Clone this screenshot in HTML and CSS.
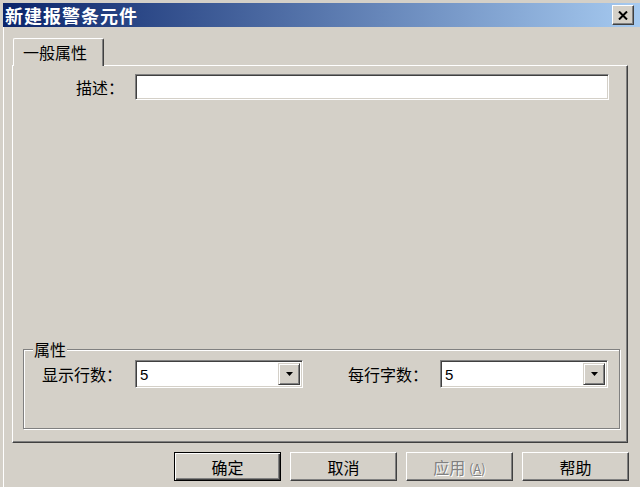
FILE: index.html
```html
<!DOCTYPE html>
<html lang="zh-CN">
<head>
    <meta charset="UTF-8">
    <meta name="viewport" content="width=device-width, initial-scale=1.0">
    <title>新建报警条元件</title>
    <link rel="stylesheet" href="styles.css">
</head>
<body>
    <div class="window">
        <div class="titlebar">
            <span class="title">新建报警条元件</span>
            <button class="close" type="button">
                <svg width="10" height="9" viewBox="0 0 10 9">
                    <path d="M1 0.5 L9 8.5 M9 0.5 L1 8.5" stroke="#000" stroke-width="2"/>
                </svg>
            </button>
        </div>
        <div class="content">
            <div class="tabs">
                <div class="tab">一般属性</div>
            </div>
            <div class="panel">
                <div class="desc-row">
                    <label class="desc-label">描述：</label>
                    <input class="text-input" type="text">
                </div>
                <fieldset class="group">
                    <legend>属性</legend>
                    <div class="group-row">
                        <div class="field field-left">
                            <label>显示行数：</label>
                            <div class="combo">
                                <span class="combo-value">5</span>
                                <span class="combo-btn">
                                    <svg width="7" height="4" viewBox="0 0 7 4"><polygon points="0,0 7,0 3.5,4" fill="#000"/></svg>
                                </span>
                            </div>
                        </div>
                        <div class="field field-right">
                            <label>每行字数：</label>
                            <div class="combo">
                                <span class="combo-value">5</span>
                                <span class="combo-btn">
                                    <svg width="7" height="4" viewBox="0 0 7 4"><polygon points="0,0 7,0 3.5,4" fill="#000"/></svg>
                                </span>
                            </div>
                        </div>
                    </div>
                </fieldset>
            </div>
            <div class="buttons">
                <button class="btn btn-default" type="button">确定</button>
                <button class="btn" type="button">取消</button>
                <button class="btn btn-disabled" type="button">应用 <span class="accel">(<u>A</u>)</span></button>
                <button class="btn" type="button">帮助</button>
            </div>
        </div>
    </div>
</body>
</html>
```

FILE: styles.css
```css
body, html {
    margin: 0;
    padding: 0;
    width: 640px;
    height: 487px;
    overflow: hidden;
    background: #d4d0c8;
    font-family: "Noto Sans CJK SC", "Liberation Sans", sans-serif;
    font-size: 16px;
    color: #000;
}
.window {
    height: 487px;
    box-sizing: border-box;
    border-top: 3px solid #d4d0c8;
    border-left: 3px solid #d4d0c8;
    box-shadow: inset 1px 1px #fff;
}
.titlebar {
    height: 24px;
    display: flex;
    align-items: center;
    justify-content: space-between;
    background: linear-gradient(90deg, #0a246a, #a6caf0);
    padding: 0 6px 0 2px;
}
.title {
    color: #fff;
    font-weight: bold;
    font-size: 18px;
    letter-spacing: 1px;
    line-height: 24px;
}
.close {
    width: 22px;
    height: 20px;
    padding: 0;
    display: flex;
    align-items: center;
    justify-content: center;
    background: #d4d0c8;
    border: 1px solid;
    border-color: #fff #404040 #404040 #fff;
    box-shadow: inset -1px -1px #808080;
}
.content {
    padding: 11px 12px 0 9px;
}
.tabs {
    display: flex;
    position: relative;
    z-index: 1;
    margin-bottom: -1px;
}
.tab {
    margin-left: 1px;
    width: 91px;
    height: 28px;
    box-sizing: border-box;
    padding-left: 9px;
    line-height: 26px;
    background: #d4d0c8;
    border-top: 1px solid #fff;
    border-left: 1px solid #fff;
    border-right: 1px solid #404040;
    box-shadow: inset -1px 0 #808080;
    border-radius: 2px 2px 0 0;
}
.panel {
    height: 378px;
    box-sizing: border-box;
    display: flex;
    flex-direction: column;
    justify-content: space-between;
    border-top: 1px solid #fff;
    border-left: 1px solid #fff;
    border-right: 1px solid #404040;
    border-bottom: 1px solid #404040;
    box-shadow: inset -1px -1px #808080;
    padding-top: 8px;
}
.desc-row {
    display: flex;
    align-items: center;
    padding-right: 18px;
}
.desc-label {
    flex: none;
    width: 122px;
    padding-right: 11px;
    box-sizing: border-box;
    text-align: right;
}
.text-input {
    flex: 1;
    height: 26px;
    box-sizing: border-box;
    background: #fff;
    border: 1px solid;
    border-color: #808080 #fff #fff #808080;
    box-shadow: inset 1px 1px #404040, inset -1px -1px #d4d0c8;
    outline: none;
    padding: 0 4px;
    font: inherit;
}
.group {
    margin: 0 7px 13px 10px;
    padding: 2px 0 0 0;
    height: 89px;
    box-sizing: border-box;
    border: 1px solid #808080;
    box-shadow: inset 1px 1px #fff, 1px 1px #fff;
}
.group legend {
    margin-left: 9px;
    padding: 0 1px;
    line-height: 18px;
    background: #d4d0c8;
}
.group-row {
    display: flex;
    justify-content: space-between;
}
.field {
    display: flex;
    align-items: center;
}
.field-left {
    margin-left: 18px;
}
.field-left label {
    width: 93px;
}
.field-right label {
    width: 92px;
}
.combo {
    width: 168px;
    height: 28px;
    box-sizing: border-box;
    display: flex;
    align-items: center;
    justify-content: space-between;
    background: #fff;
    border: 1px solid;
    border-color: #808080 #fff #fff #808080;
    box-shadow: inset 1px 1px #404040, inset -1px -1px #d4d0c8;
    padding: 2px 2px 2px 4px;
}
.field-right .combo {
    margin-right: 11px;
}
.combo-value {
    font-family: "Liberation Sans", sans-serif;
    font-size: 15px;
}
.combo-btn {
    width: 22px;
    height: 22px;
    box-sizing: border-box;
    display: flex;
    align-items: center;
    justify-content: center;
    background: #d4d0c8;
    border: 1px solid;
    border-color: #d4d0c8 #404040 #404040 #d4d0c8;
    box-shadow: inset 1px 1px #fff, inset -1px -1px #808080;
}
.buttons {
    display: flex;
    justify-content: flex-end;
    gap: 9px;
    margin-top: 9px;
    margin-right: -1px;
}
.btn {
    width: 107px;
    height: 29px;
    padding: 0;
    background: #d4d0c8;
    font: inherit;
    color: #000;
    border: 1px solid;
    border-color: #fff #404040 #404040 #fff;
    box-shadow: inset -1px -1px #808080;
}
.btn-default {
    border: 1px solid #000;
    box-shadow: inset 1px 1px #fff, inset -1px -1px #404040, inset -2px -2px #808080;
}
.btn-disabled {
    color: #808080;
    text-shadow: 1px 1px #fff;
}
.accel {
    font-size: 13px;
}
```
